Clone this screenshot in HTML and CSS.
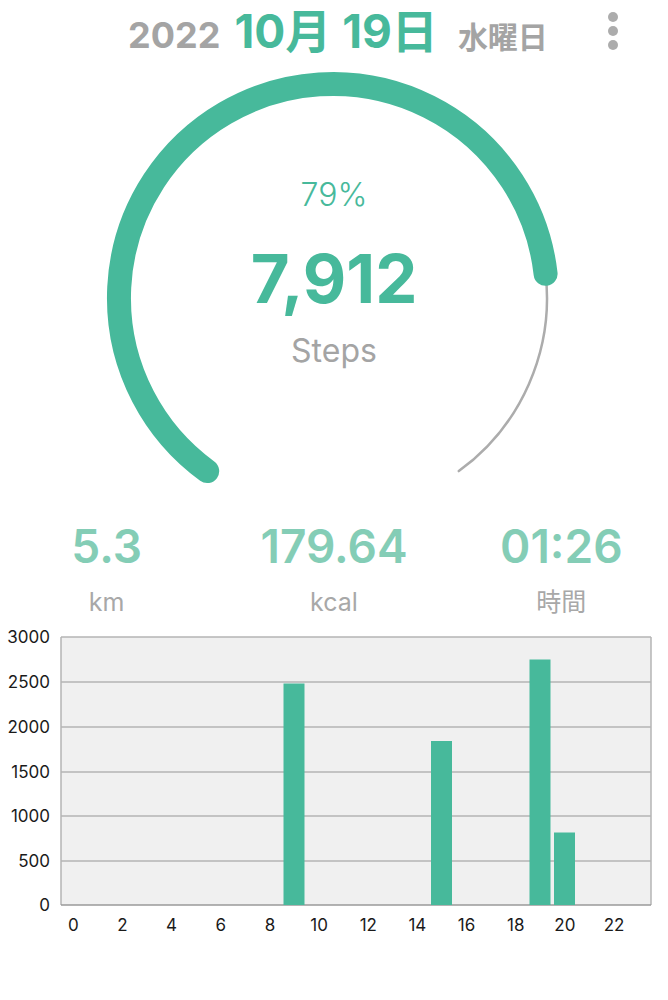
FILE: index.html
```html
<!doctype html>
<html lang="ja">
<head>
    <meta charset="UTF-8">
    <title>歩数</title>
    <link rel="stylesheet" href="styles.css">
</head>
<body>
    <header class="date-bar">
        <span class="year">2022</span>
        <span class="day">10月 19日</span>
        <span class="weekday">水曜日</span>
        <button class="menu" aria-label="menu">
            <span></span><span></span><span></span>
        </button>
    </header>

    <section class="gauge">
        <svg class="gauge-ring" viewBox="0 0 668 440" width="668" height="440">
            <path d="M545.6 213.8 A214 214 0 0 1 458.8 411.1" fill="none" stroke="#acacac" stroke-width="2.5" stroke-linecap="round"/>
            <path d="M207.2 411.1 A214 214 0 1 1 545.6 213.8" fill="none" stroke="#47b99b" stroke-width="24" stroke-linecap="round"/>
        </svg>
        <div class="gauge-text">
            <div class="percent">79%</div>
            <div class="steps">7,912</div>
            <div class="steps-label">Steps</div>
        </div>
    </section>

    <section class="stats">
        <div class="stat">
            <div class="stat-value">5.3</div>
            <div class="stat-label">km</div>
        </div>
        <div class="stat">
            <div class="stat-value">179.64</div>
            <div class="stat-label">kcal</div>
        </div>
        <div class="stat">
            <div class="stat-value">01:26</div>
            <div class="stat-label">時間</div>
        </div>
    </section>

    <section class="chart">
        <svg viewBox="0 0 668 330" width="668" height="330">
            <rect x="61" y="17" width="590" height="268" fill="#f0f0f0"/>
            <g stroke="#b4b4b4" stroke-width="1.5">
                <line x1="61" y1="17" x2="651" y2="17"/>
                <line x1="61" y1="62" x2="651" y2="62"/>
                <line x1="61" y1="107" x2="651" y2="107"/>
                <line x1="61" y1="152" x2="651" y2="152"/>
                <line x1="61" y1="196" x2="651" y2="196"/>
                <line x1="61" y1="241" x2="651" y2="241"/>
                <line x1="61" y1="17" x2="61" y2="285"/>
                <line x1="651" y1="17" x2="651" y2="285"/>
            </g>
            <line x1="61" y1="285" x2="651" y2="285" stroke="#9a9a9a" stroke-width="1.5"/>

            <g fill="#47b99b">
                <rect x="283.5" y="63.5" width="21" height="221.5"/>
                <rect x="431" y="121" width="21" height="164"/>
                <rect x="529.5" y="39.5" width="21" height="245.5"/>
                <rect x="554" y="212.5" width="21" height="72.5"/>
            </g>

            <g class="axis-y" text-anchor="end">
                <text x="50" y="23">3000</text>
                <text x="50" y="68">2500</text>
                <text x="50" y="113">2000</text>
                <text x="50" y="158">1500</text>
                <text x="50" y="202">1000</text>
                <text x="50" y="247">500</text>
                <text x="50" y="291">0</text>
            </g>
            <g class="axis-x" text-anchor="middle">
                <text x="73.3" y="311">0</text>
                <text x="122.4" y="311">2</text>
                <text x="171.6" y="311">4</text>
                <text x="220.8" y="311">6</text>
                <text x="269.9" y="311">8</text>
                <text x="319.1" y="311">10</text>
                <text x="368.3" y="311">12</text>
                <text x="417.4" y="311">14</text>
                <text x="466.6" y="311">16</text>
                <text x="515.8" y="311">18</text>
                <text x="564.9" y="311">20</text>
                <text x="614.1" y="311">22</text>
            </g>
        </svg>
    </section>
</body>
</html>
```

FILE: styles.css
```css
body {
    margin: 0;
    background-color: #fff;
    font-family: Inter, "Noto Sans CJK JP", sans-serif;
}

.date-bar {
    position: relative;
    display: flex;
    justify-content: center;
    align-items: baseline;
    gap: 14px;
    height: 62px;
    padding-left: 8px;
    line-height: 62px;
    font-weight: 700;
}

.year {
    font-size: 36px;
    color: #a4a4a4;
}

.day {
    font-size: 46px;
    color: #47b99b;
}

.weekday {
    margin-left: 6px;
    font-size: 30px;
    color: #a4a4a4;
}

.menu {
    position: absolute;
    top: 12px;
    right: 50px;
    display: flex;
    flex-direction: column;
    gap: 4px;
    padding: 0;
    border: none;
    background: none;
}

.menu span {
    width: 10px;
    height: 10px;
    border-radius: 50%;
    background-color: #acacac;
}

.gauge {
    position: relative;
    height: 440px;
    margin-top: -2px;
}

.gauge-ring {
    position: absolute;
    top: 0;
    left: 0;
}

.gauge-text {
    position: relative;
    display: flex;
    flex-direction: column;
    align-items: center;
    padding-top: 113px;
}

.percent {
    font-size: 32px;
    font-weight: 300;
    color: #47b99b;
    line-height: 44px;
}

.steps {
    margin-top: 22px;
    font-size: 67px;
    font-weight: 700;
    color: #47b99b;
    line-height: 80px;
}

.steps-label {
    margin-top: 12px;
    font-size: 32px;
    color: #a4a4a4;
    line-height: 40px;
}

.stats {
    display: grid;
    grid-template-columns: repeat(3, 1fr);
    margin: 16px -7px 0;
}

.stat {
    text-align: center;
}

.stat-value {
    font-size: 46px;
    font-weight: 600;
    color: #84cdb6;
    line-height: 60px;
}

.stat-label {
    margin-top: 4px;
    font-size: 25px;
    color: #a8a8a8;
    line-height: 44px;
}

.chart {
    margin-top: -4px;
}

.chart svg {
    display: block;
}

.axis-y text,
.axis-x text {
    font-family: Inter, sans-serif;
    font-size: 17px;
    fill: #1a1a1a;
}
```
